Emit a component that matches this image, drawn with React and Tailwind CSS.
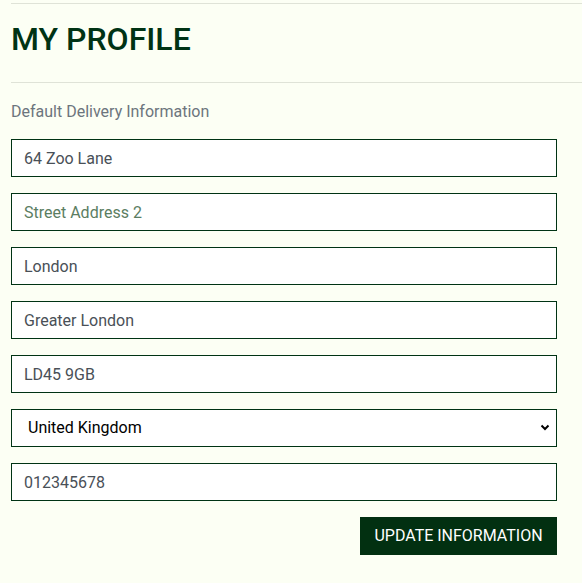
import { useState } from "react";

const fieldCls =
  "block w-full h-[38px] px-3 bg-white border border-[#003314] text-[16px] text-[#495057] placeholder:text-[#5b7d62] outline-none";

function ProfilePage() {
  const [form, setForm] = useState({
    street1: "64 Zoo Lane",
    street2: "",
    town: "London",
    county: "Greater London",
    postcode: "LD45 9GB",
    country: "GB",
    phone: "012345678",
  });

  const update = (key) => (e) => setForm({ ...form, [key]: e.target.value });

  return (
    <div
      className="min-h-screen bg-[#fcfff4] pl-[11px] pt-[3px]"
      style={{ fontFamily: "Roboto, 'Liberation Sans', sans-serif" }}
    >
      <hr className="border-0 border-t border-[#dfe3d7]" />
      <h2 className="mt-4 text-[32px] leading-[1.2] font-medium text-[#003314]">
        MY PROFILE
      </h2>
      <hr className="mt-6 border-0 border-t border-[#dfe3d7]" />

      <form className="w-[546px] mt-[17px]" onSubmit={(e) => e.preventDefault()}>
        <p className="text-[16px] leading-6 text-[#6c757d] mb-[15px]">
          Default Delivery Information
        </p>
        <div className="flex flex-col gap-4">
          <input className={fieldCls} value={form.street1} onChange={update("street1")} />
          <input
            className={fieldCls}
            placeholder="Street Address 2"
            value={form.street2}
            onChange={update("street2")}
          />
          <input className={fieldCls} value={form.town} onChange={update("town")} />
          <input className={fieldCls} value={form.county} onChange={update("county")} />
          <input className={fieldCls} value={form.postcode} onChange={update("postcode")} />
          <div className="relative">
            <select
              className="block w-full h-[38px] pl-4 pr-8 bg-white border border-[#003314] text-[16px] text-black appearance-none outline-none"
              value={form.country}
              onChange={update("country")}
            >
              <option value="GB">United Kingdom</option>
              <option value="IE">Ireland</option>
              <option value="US">United States</option>
            </select>
            <svg
              className="absolute right-[7px] top-[15px] pointer-events-none"
              width="10"
              height="7"
              viewBox="0 0 10 7"
            >
              <path d="M1.5 1.5 L5 5 L8.5 1.5" fill="none" stroke="#000" strokeWidth="2" />
            </svg>
          </div>
          <input className={fieldCls} value={form.phone} onChange={update("phone")} />
        </div>
        <div className="flex justify-end mt-4">
          <button
            type="submit"
            className="h-[38px] w-[197px] bg-[#023011] text-white text-[16px] flex items-center justify-center"
          >
            UPDATE INFORMATION
          </button>
        </div>
      </form>
    </div>
  );
}

export default function App() {
  return <ProfilePage />;
}
